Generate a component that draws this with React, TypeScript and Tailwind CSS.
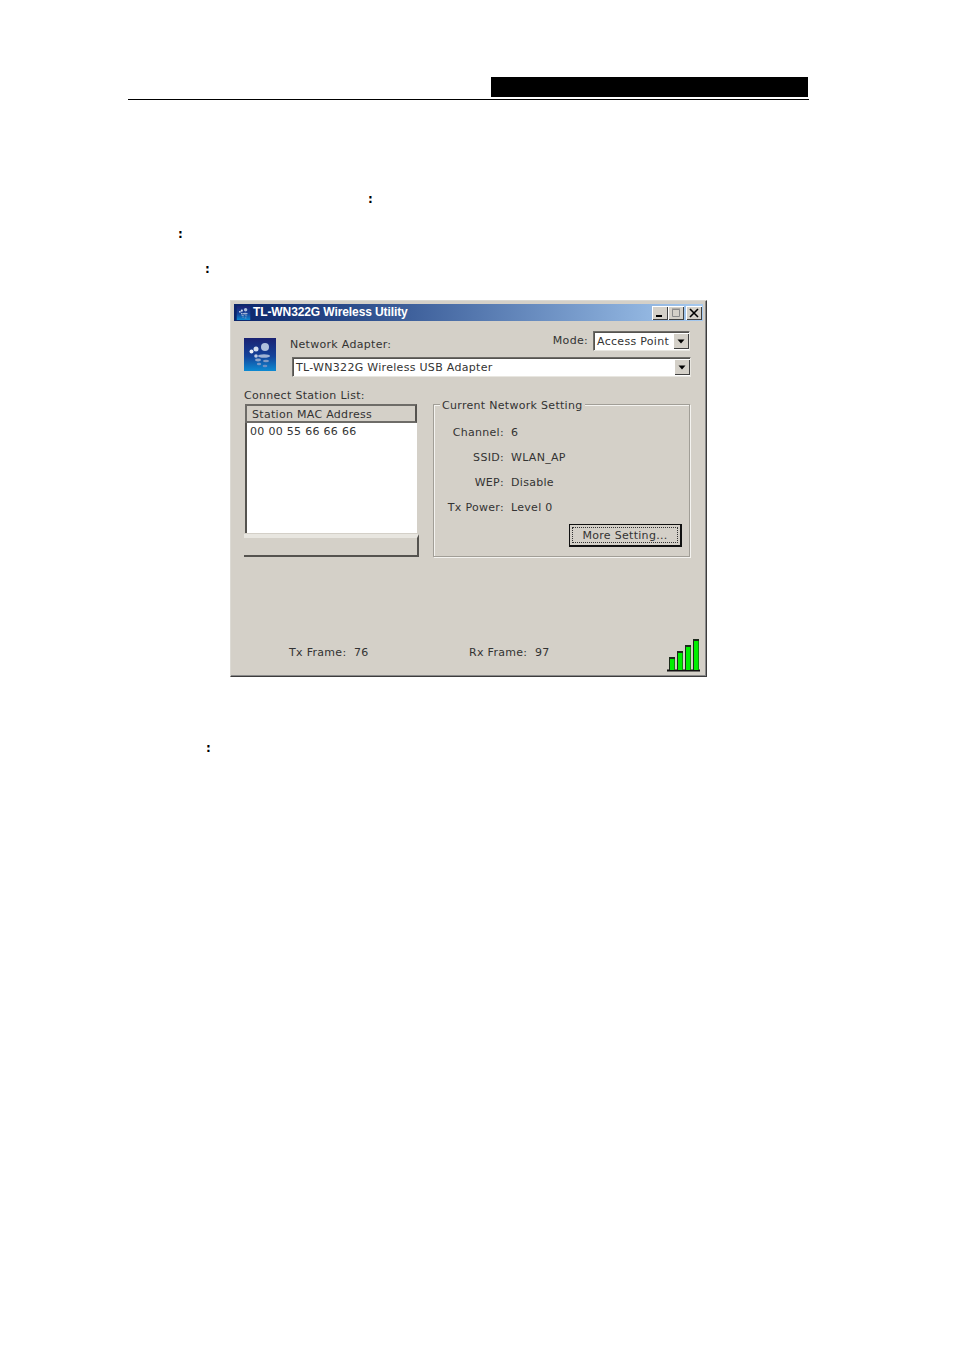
const FONT = "font-['DejaVu_Sans',sans-serif]";

function Dots({ id, className }: { id: string; className: string }) {
  return (
    <svg viewBox="0 0 32 33" className={className}>
      <defs>
        <linearGradient id={id} x1="0" y1="0" x2="0" y2="1">
          <stop offset="0" stopColor="#1a2272" />
          <stop offset="0.55" stopColor="#14439a" />
          <stop offset="1" stopColor="#0c8ad2" />
        </linearGradient>
      </defs>
      <rect width="32" height="33" fill={`url(#${id})`} />
      <g className="blur-[0.7px]">
        <circle cx="21" cy="9" r="4" fill="#aebfdc" />
        <circle cx="12" cy="11" r="2.5" fill="#d4deee" />
        <circle cx="7.5" cy="13.5" r="2" fill="#eef2f8" />
        <ellipse cx="20" cy="18" rx="6" ry="1.8" fill="#a0b3d4" />
        <circle cx="12" cy="18" r="1.8" fill="#c0cde4" />
        <ellipse cx="14" cy="22" rx="3" ry="1.4" fill="#8da5cb" />
        <ellipse cx="22" cy="23" rx="3" ry="1.3" fill="#7f9ac4" />
        <ellipse cx="15" cy="26" rx="2.2" ry="1.2" fill="#7a98c6" />
        <ellipse cx="21" cy="28" rx="2.4" ry="1.2" fill="#6d90c4" />
      </g>
    </svg>
  );
}

function CaptionButton({ kind }: { kind: "min" | "max" | "close" }) {
  return (
    <div className="flex h-[14px] w-[16px] items-center justify-center bg-[#d4d0c8] shadow-[inset_1px_1px_0_#fff,inset_-1px_-1px_0_#404040]">
      <svg viewBox="0 0 12 10" className="h-[10px] w-[12px]">
        {kind === "min" && <rect x="2" y="7" width="6" height="2" fill="#000" />}
        {kind === "max" && <path d="M2.5 1.5h7v7h-7z M2 1h8" fill="none" stroke="#8a8a8a" />}
        {kind === "close" && <path d="M2 1l8 8M10 1l-8 8" stroke="#000" strokeWidth="1.6" />}
      </svg>
    </div>
  );
}

function DropArrow() {
  return (
    <div className="flex h-[16px] w-[16px] items-center justify-center bg-[#d4d0c8] shadow-[inset_1px_1px_0_#fff,inset_-1px_-1px_0_#404040]">
      <svg viewBox="0 0 8 5" className="h-[5px] w-[8px]">
        <path d="M0.5 0.5h7L4 4.5z" fill="#000" />
      </svg>
    </div>
  );
}

function Select({ text, className }: { text: string; className: string }) {
  return (
    <div className={`flex h-[20px] items-center justify-between border border-[#e8e6e0] border-l-[#6e6c68] border-t-[#6e6c68] bg-white pl-[3px] shadow-[inset_1px_1px_0_#55534f] ${className}`}>
      <span className="text-[11px] leading-none text-[#333]">{text}</span>
      <DropArrow />
    </div>
  );
}

function Field({ label, value }: { label: string; value: string }) {
  return (
    <div className="flex h-[25px] items-center text-[11px] text-[#333]">
      <span className="w-[70px] text-right">{label}</span>
      <span className="ml-[7px]">{value}</span>
    </div>
  );
}

function SignalBars() {
  return (
    <svg viewBox="0 0 33 33" className="h-[33px] w-[33px]">
      <path d="M0 31.5h33" stroke="#111" strokeWidth="2" />
      {[
        { x: 2, y: 18 },
        { x: 10, y: 12 },
        { x: 18, y: 6 },
        { x: 26, y: 0 },
      ].map((b) => (
        <g key={b.x}>
          <rect x={b.x} y={b.y} width="6" height={31 - b.y} fill="#1c2a1c" />
          <rect x={b.x + 1} y={b.y + 2} width="4.5" height={29 - b.y} fill="#00f000" />
        </g>
      ))}
    </svg>
  );
}

function UtilityWindow() {
  return (
    <div className="ml-[230px] h-[377px] w-[477px] border border-[#dcdad4] border-r-[#3c3c3c] border-b-[#3c3c3c] bg-[#d4d0c8] p-[3px] tracking-[0.3px] shadow-[inset_-1px_-1px_0_#8a8a8a]">
      <div className="flex h-[17px] items-center bg-gradient-to-r from-[#0a246a] to-[#a6caf0] pr-[1px]">
        <Dots id="title-icon" className="ml-[2px] h-[14px] w-[15px]" />
        <span className="mb-[1px] ml-[2px] font-['Liberation_Sans',sans-serif] text-[12px] font-bold leading-none tracking-[-0.1px] text-white">TL-WN322G Wireless Utility</span>
        <div className="ml-auto flex">
          <CaptionButton kind="min" />
          <CaptionButton kind="max" />
          <div className="w-[2px]" />
          <CaptionButton kind="close" />
        </div>
      </div>

      <div className="flex pt-[10px] pl-[10px]">
        <Dots id="big-icon" className="mt-[7px] h-[33px] w-[32px]" />
        <div className="ml-[14px] w-[402px]">
          <div className="flex h-[26px] items-start justify-between pr-[2px]">
            <span className="mt-[7px] text-[11px] leading-[14px] text-[#333]">Network Adapter:</span>
            <div className="flex items-start">
              <span className="mt-[3px] mr-[5px] text-[11px] leading-[14px] text-[#333]">Mode:</span>
              <Select text="Access Point" className="w-[97px]" />
            </div>
          </div>
          <Select text="TL-WN322G Wireless USB Adapter" className="ml-[2px] w-[399px]" />
        </div>
      </div>

      <div className="flex pl-[10px]">
        <div className="w-[175px]">
          <div className="mt-[12px] h-[15px] text-[11px] leading-[14px] text-[#333]">Connect Station List:</div>
          <div className="ml-[1px] w-[172px]">
            <div className="h-[19px] border-2 border-[#6e6c68] border-r-[#55534f] bg-[#d4d0c8] pl-[5px] text-[11px] leading-[18px] text-[#333]">Station MAC Address</div>
            <div className="h-[110px] border-l-2 border-[#55534f] bg-white pl-[3px] text-[11px] leading-[18px] text-[#333]">00 00 55 66 66 66</div>
          </div>
          <div className="mt-[1px] h-[23px] border-t-4 border-b-2 border-r-2 border-[#e8e6e0] border-r-[#55534f] border-b-[#55534f] bg-[#d4d0c8]" />
        </div>

        <fieldset className="mt-[18px] ml-[14px] h-[162px] w-[257px] border border-[#a19e97] pt-[8px] shadow-[inset_1px_1px_0_#f4f3f0,1px_1px_0_#f4f3f0]">
          <legend className="ml-[6px] bg-[#d4d0c8] px-[2px] pt-[4px] text-[11px] leading-[14px] text-[#333]">Current Network Setting</legend>
          <Field label="Channel:" value="6" />
          <Field label="SSID:" value="WLAN_AP" />
          <Field label="WEP:" value="Disable" />
          <Field label="Tx Power:" value="Level 0" />
          <div className="mt-[3px] flex justify-end pr-[7px]">
            <button className="flex h-[23px] w-[113px] items-center justify-center border border-[#111] border-r-2 border-b-2 bg-[#d4d0c8] p-[2px]">
              <span className="flex h-full w-full items-center justify-center border border-dotted border-[#333] text-[11px] leading-none text-[#333]">More Setting...</span>
            </button>
          </div>
        </fieldset>
      </div>

      <div className="flex items-end pr-[3px] pt-[82px]">
        <div className="mb-[12px] flex text-[11px] leading-[14px] text-[#333]">
          <span className="ml-[55px] w-[180px]">Tx Frame:&nbsp; 76</span>
          <span>Rx Frame:&nbsp; 97</span>
        </div>
        <div className="ml-auto">
          <SignalBars />
        </div>
      </div>
    </div>
  );
}

export default function App() {
  return (
    <div className={`h-[1350px] w-[954px] bg-white ${FONT}`}>
      <div className="ml-[128px] w-[681px] pt-[77px]">
        <div className="ml-[363px] h-[20px] w-[317px] bg-black" />
        <div className="mt-[2px] h-px bg-black" />
      </div>
      <div className="pt-[92px] text-[12px] font-bold leading-[15px] text-black">
        <div className="pl-[368px]">:</div>
        <div className="mt-[20px] pl-[178px]">:</div>
        <div className="mt-[20px] pl-[205px]">:</div>
      </div>
      <div className="mt-[23px]">
        <UtilityWindow />
      </div>
      <div className="mt-[64px] pl-[206px] text-[12px] font-bold leading-[15px] text-black">:</div>
    </div>
  );
}
